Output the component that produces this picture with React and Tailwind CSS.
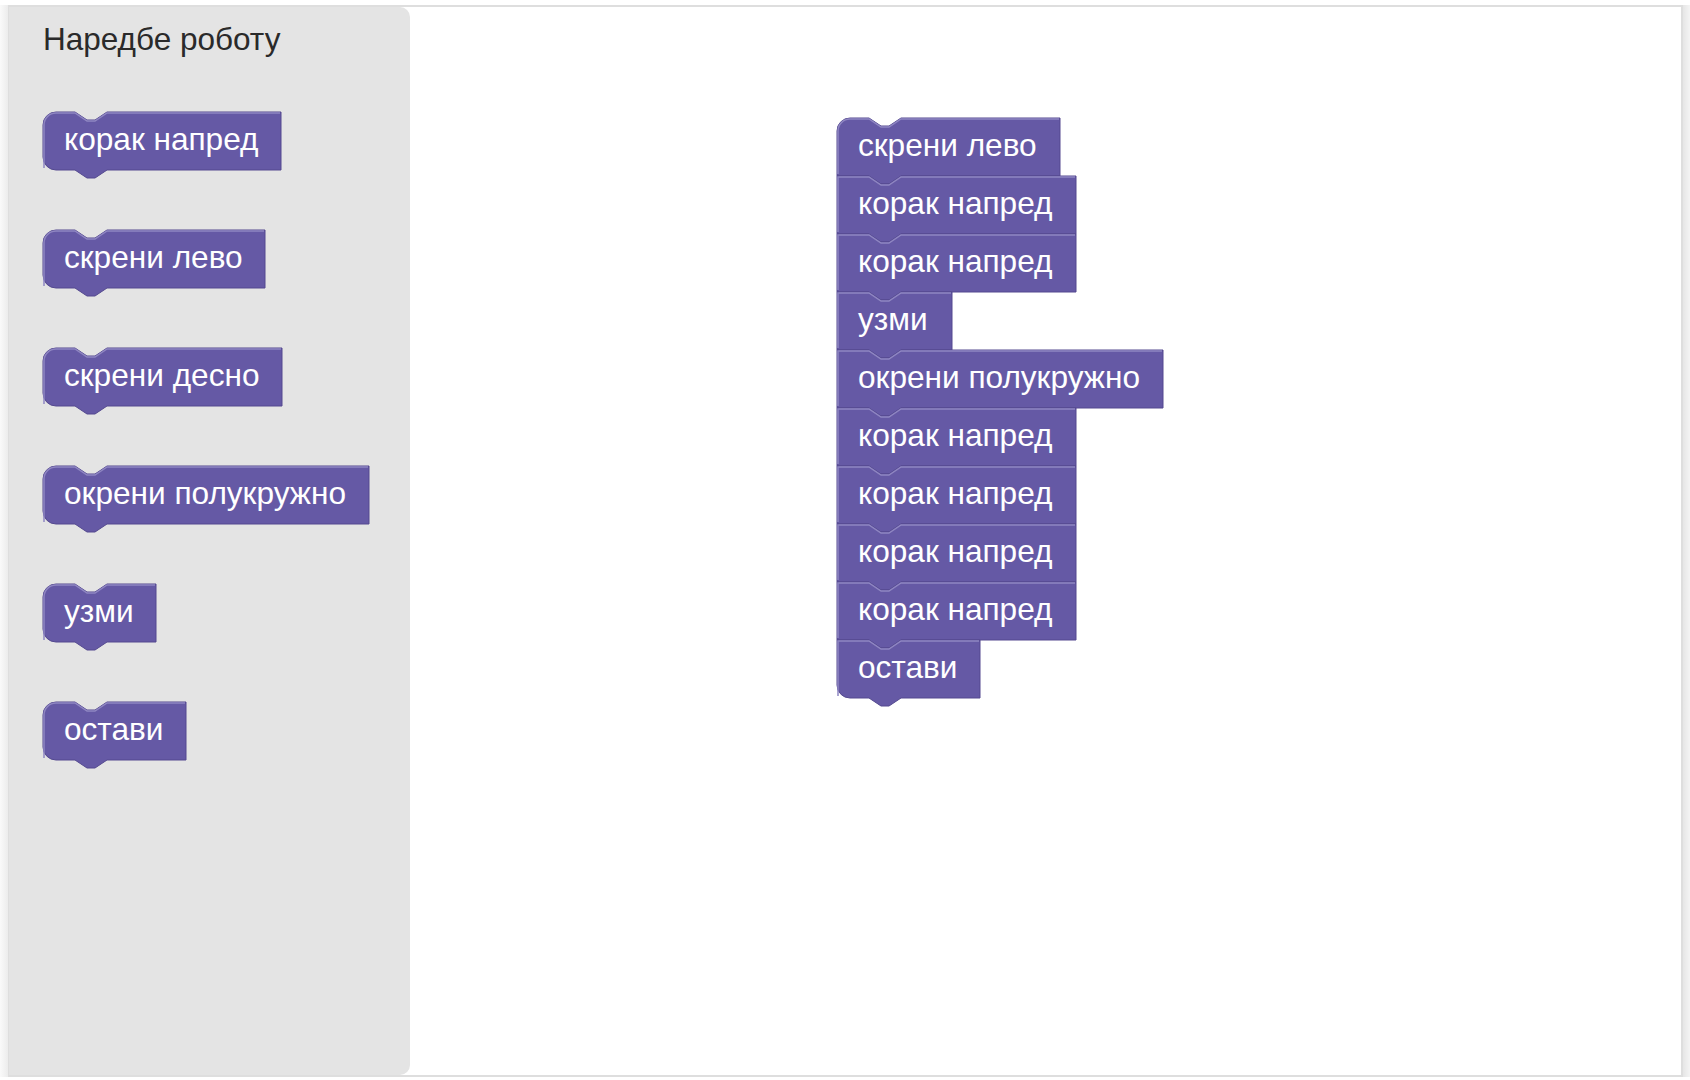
import React from 'react';

const BLOCK_H = 58;
const R = 13;

// blockly-like statement block shape
const blockPath = (w, roundTop, roundBottom) => {
  const h = BLOCK_H;
  let d = roundTop ? `M 0,${R} A ${R},${R} 0 0 1 ${R},0 ` : 'M 0,0 ';
  d += `L 32,0 l 12,8 l 8,0 l 12,-8 L ${w},0 L ${w},${h} L 64,${h} l -12,8 l -8,0 l -12,-8 `;
  d += roundBottom ? `L ${R},${h} A ${R},${R} 0 0 1 0,${h - R} Z` : `L 0,${h} Z`;
  return d;
};

const highlightPath = (w, roundTop) => {
  let d = roundTop ? `M 1,${BLOCK_H - 2} L 1,${R} A ${R - 1},${R - 1} 0 0 1 ${R},1 ` : `M 1,${BLOCK_H - 2} L 1,1 `;
  d += `L 32,1 l 12,8 l 8,0 l 12,-8 L ${w - 1},1`;
  return d;
};

const Block = ({ label, width, roundTop = true, roundBottom = true }) => (
  <div className="relative shrink-0" style={{ width, height: BLOCK_H }}>
    <svg className="absolute left-0 top-0 overflow-visible" width={width} height={BLOCK_H + 8}>
      <path d={blockPath(width, roundTop, roundBottom)} fill="#6559a5" stroke="#54498f" strokeWidth="1" />
      <path d={highlightPath(width, roundTop)} fill="none" stroke="#8f86c2" strokeWidth="1.5" />
    </svg>
    <span className="relative block pl-[21px] text-[31.6px] leading-[54px] text-white whitespace-nowrap font-['Liberation_Sans',Arial,sans-serif]">
      {label}
    </span>
  </div>
);

const toolbox = [
  { label: 'корак напред', width: 238 },
  { label: 'скрени лево', width: 222 },
  { label: 'скрени десно', width: 239 },
  { label: 'окрени полукружно', width: 326 },
  { label: 'узми', width: 113 },
  { label: 'остави', width: 143 },
];

const program = [
  { label: 'скрени лево', width: 223 },
  { label: 'корак напред', width: 239 },
  { label: 'корак напред', width: 239 },
  { label: 'узми', width: 115 },
  { label: 'окрени полукружно', width: 326 },
  { label: 'корак напред', width: 239 },
  { label: 'корак напред', width: 239 },
  { label: 'корак напред', width: 239 },
  { label: 'корак напред', width: 239 },
  { label: 'остави', width: 143 },
];

export default function App() {
  return (
    <div className="h-[1080px] w-[1690px] bg-white flex flex-col overflow-hidden font-['Liberation_Sans',Arial,sans-serif]">
      <div className="h-[5px] shrink-0" />
      <div className="flex h-[1072px] shrink-0">
        <div className="w-[8px] bg-gradient-to-r from-[#fafafa] to-[#ececec]" />
        <div className="flex-1 flex border-t-2 border-b-2 border-l border-r-2 border-[#dedede]">
          {/* flyout / toolbox */}
          <div className="w-[401px] shrink-0 bg-[#e4e4e4] rounded-r-[10px] flex flex-col pl-[34px] pt-[17px]">
            <div className="text-[31.5px] leading-[31px] text-[#2a2a2a] whitespace-nowrap">Наредбе роботу</div>
            <div className="flex flex-col gap-[60px] mt-[57px]">
              {toolbox.map((b) => (
                <Block key={b.label} label={b.label} width={b.width} />
              ))}
            </div>
          </div>
          {/* workspace canvas */}
          <div className="flex-1 relative">
            <div className="absolute left-[427px] top-[111px] flex flex-col">
              {program.map((b, i) => (
                <Block
                  key={i}
                  label={b.label}
                  width={b.width}
                  roundTop={i === 0}
                  roundBottom={i === program.length - 1}
                />
              ))}
            </div>
          </div>
        </div>
        <div className="w-[7px] bg-gradient-to-r from-[#e6e6e6] to-[#f4f4f4]" />
      </div>
    </div>
  );
}
